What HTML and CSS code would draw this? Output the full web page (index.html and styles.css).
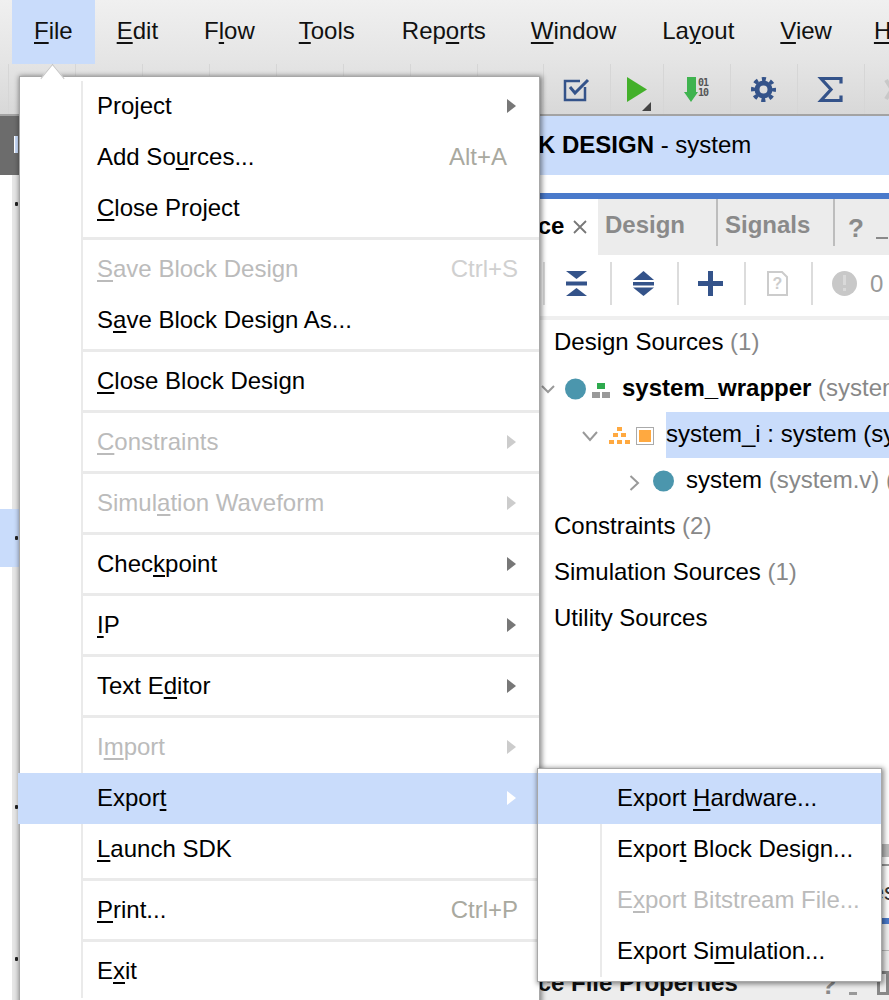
FILE: index.html
```html
<!DOCTYPE html>
<html lang="en">
<head>
<meta charset="utf-8">
<title>Vivado File Menu</title>
<link rel="stylesheet" href="styles.css">
</head>
<body>
<div class="app">
  <nav class="menubar">
    <div class="title open"><u>F</u>ile</div>
    <div class="title edit"><u>E</u>dit</div>
    <div class="title flow">F<u>l</u>ow</div>
    <div class="title tools"><u>T</u>ools</div>
    <div class="title reports">Rep<u>o</u>rts</div>
    <div class="title window"><u>W</u>indow</div>
    <div class="title layout">La<u>y</u>out</div>
    <div class="title view"><u>V</u>iew</div>
    <div class="title help"><u>H</u>elp</div>
  </nav>

  <div class="toolbar">
    <div class="tool"></div><div class="tool"></div><div class="tool"></div><div class="tool"></div>
    <div class="tool"></div><div class="tool"></div><div class="tool"></div><div class="tool narrow"></div>
    <div class="tool">
      <svg width="66" height="51" viewBox="0 0 66 51"><path d="M41 23V36H21V17H36" fill="none" stroke="#34538a" stroke-width="2.5"/><path d="M26 23l5 6L44 16" fill="none" stroke="#34538a" stroke-width="3"/></svg>
    </div>
    <div class="tool run">
      <svg width="52" height="51" viewBox="0 0 52 51"><polygon points="16,13 36,25.5 16,38" fill="#43b02a"/><polygon points="40,38 40,47 31,47" fill="#444"/></svg>
    </div>
    <div class="tool">
      <svg width="66" height="51" viewBox="0 0 66 51"><polygon points="23,13 32,13 32,28 34,28 27,38 20,28 23,28" fill="#3fb34f"/><text class="bits" x="34" y="22" textLength="11">01</text><text class="bits" x="34" y="32" textLength="11">10</text></svg>
    </div>
    <div class="tool">
      <svg width="66" height="51" viewBox="0 0 66 51"><circle cx="32.5" cy="25.5" r="6.5" fill="none" stroke="#34538a" stroke-width="5"/><circle cx="32.5" cy="25.5" r="10.5" fill="none" stroke="#34538a" stroke-width="4" stroke-dasharray="4.1 4.15" stroke-dashoffset="2"/></svg>
    </div>
    <div class="tool">
      <svg width="66" height="51" viewBox="0 0 66 51"><path d="M43 19.5V14.500H23L33 25.500 23 36.500H43V31.500" fill="none" stroke="#34538a" stroke-width="3.200"/></svg>
    </div>
    <div class="tool">
      <svg width="66" height="51" viewBox="0 0 66 51"><path d="M21 16L33 35M33 16L21 35" stroke="#c8c8c8" stroke-width="4"/></svg>
    </div>
  </div>

  <div class="workspace">
    <aside class="flownav">
      <div class="navhead"><span class="navmark"></span></div>
      <div class="navrow"><span class="navchev"></span></div>
      <div class="navrow sim"><span class="navchev"></span></div>
      <div class="navrow impl"><span class="navchev"></span></div>
      <div class="navrow prog"><span class="navchev"></span></div>
    </aside>

    <main class="content">
      <header class="designhead"><b>BLOCK DESIGN</b> - system</header>
      <div class="headgap"></div>
      <div class="bluebar"></div>

      <div class="tabs">
        <div class="tab active"><span>Source</span>
          <svg class="tabclose" width="14" height="14" viewBox="0 0 14 14"><path d="M1 1L13 13M13 1L1 13" stroke="#777" stroke-width="1.800"/></svg>
        </div>
        <div class="tab design">Design</div>
        <div class="tab signals">Signals</div>
        <div class="tabhelp">?</div>
        <div class="tabmin"></div>
      </div>

      <div class="paneltools">
        <div class="ptool">
          <svg width="65" height="43" viewBox="0 0 65 43"><polygon points="21,9 42,9 31.500,17" fill="#34538a"/><rect x="21" y="19.500" width="21" height="4" fill="#34538a"/><polygon points="31.500,26 42,34 21,34" fill="#34538a"/></svg>
        </div>
        <div class="ptool">
          <svg width="65" height="43" viewBox="0 0 65 43"><polygon points="31.500,9 42,18 21,18" fill="#34538a"/><rect x="21" y="20" width="21" height="3.500" fill="#34538a"/><polygon points="21,25.500 42,25.500 31.500,34" fill="#34538a"/></svg>
        </div>
        <div class="ptool">
          <svg width="65" height="43" viewBox="0 0 65 43"><path d="M19 21.500H44M31.500 9V34" stroke="#34538a" stroke-width="5"/></svg>
        </div>
        <div class="ptool">
          <svg width="65" height="43" viewBox="0 0 65 43"><path d="M22 10H36L41 15V33H22Z" fill="none" stroke="#ccc" stroke-width="2"/><text class="docq" x="31.500" y="27" text-anchor="middle">?</text></svg>
        </div>
        <div class="ptool count">
          <svg width="54" height="43" viewBox="0 0 54 43"><circle cx="31.500" cy="21.500" r="12.500" fill="#c8c8c8"/><rect x="30" y="13" width="3" height="10" fill="#d9d9d9"/><rect x="30" y="26" width="3" height="3" fill="#d9d9d9"/></svg>
          <span class="zero">0</span>
        </div>
      </div>

      <div class="tree">
        <div class="node top">Design Sources <span class="dim">(1)</span></div>
        <div class="node wrapper">
          <svg width="81" height="46" viewBox="0 0 81 46"><polyline points="1,20 7,26 13,20" fill="none" stroke="#999" stroke-width="2"/><circle cx="34.500" cy="23" r="10.500" fill="#4b96ad"/><rect x="56" y="17" width="8" height="6" fill="#2eaa4e"/><rect x="51" y="26" width="8" height="6" fill="#999"/><rect x="61" y="26" width="8" height="6" fill="#999"/></svg>
          <span class="label"><b>system_wrapper</b> <span class="dim">(system_wrapper.v) (1)</span></span>
        </div>
        <div class="node inst">
          <svg width="84" height="46" viewBox="0 0 84 46"><polyline points="1,20 8,28 15,20" fill="none" stroke="#999" stroke-width="2"/><g fill="#ffa940"><rect x="35" y="15" width="5" height="4"/><rect x="31" y="21" width="5" height="4"/><rect x="39" y="21" width="5" height="4"/><rect x="27" y="28" width="5" height="4"/><rect x="35" y="28" width="5" height="4"/><rect x="43" y="28" width="5" height="4"/></g><rect x="54.500" y="15.500" width="17" height="17" fill="#fff" stroke="#aaa"/><rect x="57" y="18" width="12" height="12" fill="#ffa940"/></svg>
          <span class="selected">system_i : system (system.bd) (1)</span>
        </div>
        <div class="node child">
          <svg width="57" height="46" viewBox="0 0 57 46"><polyline points="1.500,18 9,25 1.500,32" fill="none" stroke="#999" stroke-width="2"/><circle cx="34.500" cy="23" r="10.500" fill="#4b96ad"/></svg>
          <span class="label">system <span class="dim">(system.v) (12)</span></span>
        </div>
        <div class="node top">Constraints <span class="dim">(2)</span></div>
        <div class="node top">Simulation Sources <span class="dim">(1)</span></div>
        <div class="node top">Utility Sources</div>
      </div>

      <div class="splitter"><span class="grip"></span></div>
      <div class="lowertabs">Libraries</div>
      <div class="lowerbar"></div>
      <div class="lowerstrip"></div>
      <div class="propshead">
        <b class="propstitle">Source File Properties</b>
        <span class="propshelp">?</span>
        <span class="propsmin"></span>
        <span class="propsbox"></span>
      </div>
    </main>
  </div>

  <div class="menu file">
    <div class="row"><span>Pro<u>j</u>ect</span><i class="arrow"></i></div>
    <div class="row"><span>Add So<u>u</u>rces...</span><em class="key alt">Alt+A</em></div>
    <div class="row"><span><u>C</u>lose Project</span></div>
    <div class="sep"></div>
    <div class="row off"><span><u>S</u>ave Block Design</span><em class="key">Ctrl+S</em></div>
    <div class="row"><span>S<u>a</u>ve Block Design As...</span></div>
    <div class="sep"></div>
    <div class="row"><span><u>C</u>lose Block Design</span></div>
    <div class="sep"></div>
    <div class="row off"><span><u>C</u>onstraints</span><i class="arrow"></i></div>
    <div class="sep"></div>
    <div class="row off"><span>Simul<u>a</u>tion Waveform</span><i class="arrow"></i></div>
    <div class="sep"></div>
    <div class="row"><span>Chec<u>k</u>point</span><i class="arrow"></i></div>
    <div class="sep"></div>
    <div class="row"><span><u>I</u>P</span><i class="arrow"></i></div>
    <div class="sep"></div>
    <div class="row"><span>Text E<u>d</u>itor</span><i class="arrow"></i></div>
    <div class="sep"></div>
    <div class="row off"><span>I<u>m</u>port</span><i class="arrow"></i></div>
    <div class="row hot"><span>Expor<u>t</u></span><i class="arrow"></i></div>
    <div class="row"><span><u>L</u>aunch SDK</span></div>
    <div class="sep"></div>
    <div class="row"><span><u>P</u>rint...</span><em class="key dark">Ctrl+P</em></div>
    <div class="sep"></div>
    <div class="row"><span>E<u>x</u>it</span></div>
  </div>

  <div class="menu sub">
    <div class="row hot"><span>Export <u>H</u>ardware...</span></div>
    <div class="row"><span>Expor<u>t</u> Block Design...</span></div>
    <div class="row off"><span>E<u>x</u>port Bitstream File...</span></div>
    <div class="row"><span>Export Si<u>m</u>ulation...</span></div>
  </div>
</div>
</body>
</html>
```

FILE: styles.css
```css
* { box-sizing: border-box; }

html, body { margin: 0; padding: 0; background: #fff; }

.app {
  position: relative;
  width: 889px;
  height: 1000px;
  overflow: hidden;
  display: flex;
  flex-direction: column;
  font-family: "Liberation Sans", Arial, sans-serif;
  font-size: 24px;
  color: #000;
  white-space: nowrap;
}

u { text-decoration-thickness: 2px; text-underline-offset: 3px; }

/* menu bar */
.menubar {
  height: 64px;
  flex: none;
  display: flex;
  padding-left: 12px;
  background: linear-gradient(#f0f0f0, #e4e4e4);
}
.title {
  padding: 0 22px;
  line-height: 62px;
  color: #111;
}
.title.open { background: #c9dcfb; }
.title.flow { margin-left: 2px; }
.title.reports { margin-left: 3px; }
.title.window { margin-left: 1px; }
.title.layout { margin-left: 2px; }
.title.view { margin-left: 2px; }
.title.help { padding-left: 20px; }

/* main tool bar */
.toolbar {
  height: 52px;
  flex: none;
  display: flex;
  padding-left: 8px;
  background: linear-gradient(#e4e4e4, #d8d8d8);
  border-bottom: 2px solid #a3a3a3;
}
.tool {
  width: 67px;
  height: 50px;
  flex: none;
  border-left: 1px solid #d6d6d6;
}
.tool.narrow { width: 66px; }
.tool.run { width: 53px; }
.tool svg { display: block; }
.bits {
  font-family: "DejaVu Sans Mono", monospace;
  font-size: 10px;
  font-weight: bold;
  fill: #555;
}

/* layout below the tool bars */
.workspace {
  flex: 1;
  min-height: 0;
  display: flex;
}

.flownav {
  width: 19px;
  flex: none;
  display: flex;
  flex-direction: column;
  background: linear-gradient(90deg, #fff 12px, #e6e6e6 12px);
}
.navhead {
  height: 59px;
  flex: none;
  display: flex;
  align-items: center;
  justify-content: flex-end;
  background: #6c6c6c;
  padding-right: 1px;
}
.navmark {
  width: 4px;
  height: 17px;
  margin-top: -3px;
  background: #c9dcfb;
  border-left: 1px solid #fff;
}
.navrow {
  height: 58px;
  flex: none;
  display: flex;
  align-items: center;
  justify-content: flex-end;
  padding-right: 1px;
}
.navchev {
  width: 3px;
  height: 4px;
  background: #222;
  border-radius: 1px;
}
.navrow.sim { margin-top: 276px; background: #c9dcfb; }
.navrow.impl { margin-top: 211px; }
.navrow.prog { margin-top: 94px; }

.content {
  flex: 1;
  min-width: 0;
  display: flex;
  flex-direction: column;
}

.designhead {
  height: 59px;
  flex: none;
  line-height: 58px;
  padding-left: 451px;
  background: #c9dcfb;
}
.headgap { height: 18px; flex: none; }
.bluebar { height: 6px; flex: none; background: #4a7acb; }

/* tabs */
.tabs {
  height: 56px;
  flex: none;
  display: flex;
  background: #ececec;
  font-weight: bold;
  color: #8a8a8a;
}
.tab {
  height: 47px;
  line-height: 52px;
  flex: none;
}
.tab.active {
  width: 579px;
  height: 56px;
  padding: 0 0 2px 464px;
  color: #000;
  background: #fff;
  display: flex;
  align-items: center;
}
.tabclose { margin: 2px 0 0 9px; }
.tab.design {
  width: 120px;
  padding-left: 7px;
  border-right: 2px solid #bdbdbd;
}
.tab.signals {
  width: 117px;
  padding-left: 7px;
  border-right: 2px solid #bdbdbd;
}
.tabhelp {
  margin-left: 13px;
  font-size: 26px;
  line-height: 58px;
}
.tabmin {
  width: 12px;
  height: 2px;
  margin: 38px 0 0 12px;
  background: #8a8a8a;
}

/* panel tool bar */
.paneltools {
  height: 65px;
  flex: none;
  display: flex;
  align-items: center;
  padding: 0 0 4px 524px;
  background: #fff;
  border-bottom: 4px solid #efefef;
}
.ptool {
  width: 67px;
  height: 43px;
  flex: none;
  border-left: 2px solid #dcdcdc;
}
.ptool svg { display: block; }
.ptool.count {
  display: flex;
  align-items: center;
  width: 78px;
}
.zero { margin-left: 3px; color: #999; }
.docq {
  font-family: "Liberation Sans", Arial, sans-serif;
  font-size: 16px;
  font-weight: bold;
  fill: #ccc;
}

/* source tree */
.tree {
  height: 519px;
  flex: none;
  background: #fff;
}
.node {
  height: 46px;
  display: flex;
  align-items: center;
}
.node svg { flex: none; display: block; }
.node.top { padding-left: 535px; display: block; line-height: 44px; }
.node.wrapper { padding-left: 522px; }
.node.inst { padding-left: 563px; }
.node.child { padding-left: 610px; }
.label { margin-bottom: 2px; }
.dim { color: #888; }
.selected {
  flex: 1;
  height: 46px;
  line-height: 44px;
  background: #c9dcfb;
}

/* lower panels */
.splitter {
  height: 27px;
  flex: none;
  display: flex;
  justify-content: flex-end;
  align-items: flex-start;
  padding-top: 5px;
  border-bottom: 2px solid #999;
}
.grip { width: 12px; height: 13px; background: #bcbcbc; }
.lowertabs {
  height: 52px;
  flex: none;
  line-height: 52px;
  padding-left: 785px;
  color: #333;
}
.lowerbar { height: 6px; flex: none; background: #4a7acb; }
.lowerstrip {
  height: 27px;
  flex: none;
  background: #f0f0f0;
  border-bottom: 1px solid #bbb;
}
.propshead {
  height: 50px;
  flex: none;
  display: flex;
  align-items: center;
  padding: 0 0 0 464px;
  background: #ededed;
}
.propstitle { padding-top: 14px; color: #111; }
.propshelp {
  margin-left: 83px;
  padding-top: 18px;
  font-size: 26px;
  font-weight: bold;
  color: #8a8a8a;
}
.propsmin {
  width: 17px;
  height: 3px;
  margin: 34px 0 0 12px;
  background: #999;
}
.propsbox {
  width: 20px;
  height: 24px;
  margin: 14px 0 0 20px;
  border: 3px solid #888;
}

/* pull-down menus */
.menu {
  position: absolute;
  background: linear-gradient(#eaeaea, #eaeaea) no-repeat #fff;
  border: 1px solid #a8a8a8;
  box-shadow: 1px 1px 5px 1px rgba(0, 0, 0, 0.45);
}
.menu.file {
  left: 19px;
  top: 76px;
  width: 521px;
  height: 930px;
  padding: 4px 0;
  background-position: 61px 4px;
  background-size: 2px 917px;
}
.menu.file::before {
  content: "";
  position: absolute;
  left: 23px;
  top: -8px;
  width: 18px;
  height: 18px;
  background: #fff;
  border: 1px solid #c4c4c4;
  border-right: 0;
  border-bottom: 0;
  transform: rotate(45deg) skew(6deg, 6deg);
}
.menu.sub {
  left: 537px;
  top: 768px;
  width: 345px;
  height: 214px;
  padding: 4px 0;
  background-position: 62px 4px;
  background-size: 2px 204px;
}
.row {
  position: relative;
  height: 51px;
  display: flex;
  align-items: center;
  padding: 0 21px 2px 77px;
  color: #000;
}
.sub .row { padding-left: 79px; }
.row.off { color: #bbb; }
.row.hot { background: #c9dcfb; }
.file .row.hot { margin-left: -2px; padding-left: 79px; }
.key {
  margin-left: auto;
  font-style: normal;
  color: #d0d0d0;
}
.key.alt, .key.dark { color: #a9a99f; }
.key.alt { margin-right: 11px; }
.arrow {
  width: 0;
  height: 0;
  margin: 0 2px 0 auto;
  border-style: solid;
  border-width: 7.5px 0 7.5px 9px;
  border-color: transparent transparent transparent #777;
}
.row.off .arrow { border-left-color: #ccc; }
.row.hot .arrow { border-left-color: #fff; }
.sep {
  height: 3px;
  margin: 3px 0 4px 63px;
  background: #eaeaea;
}
```
